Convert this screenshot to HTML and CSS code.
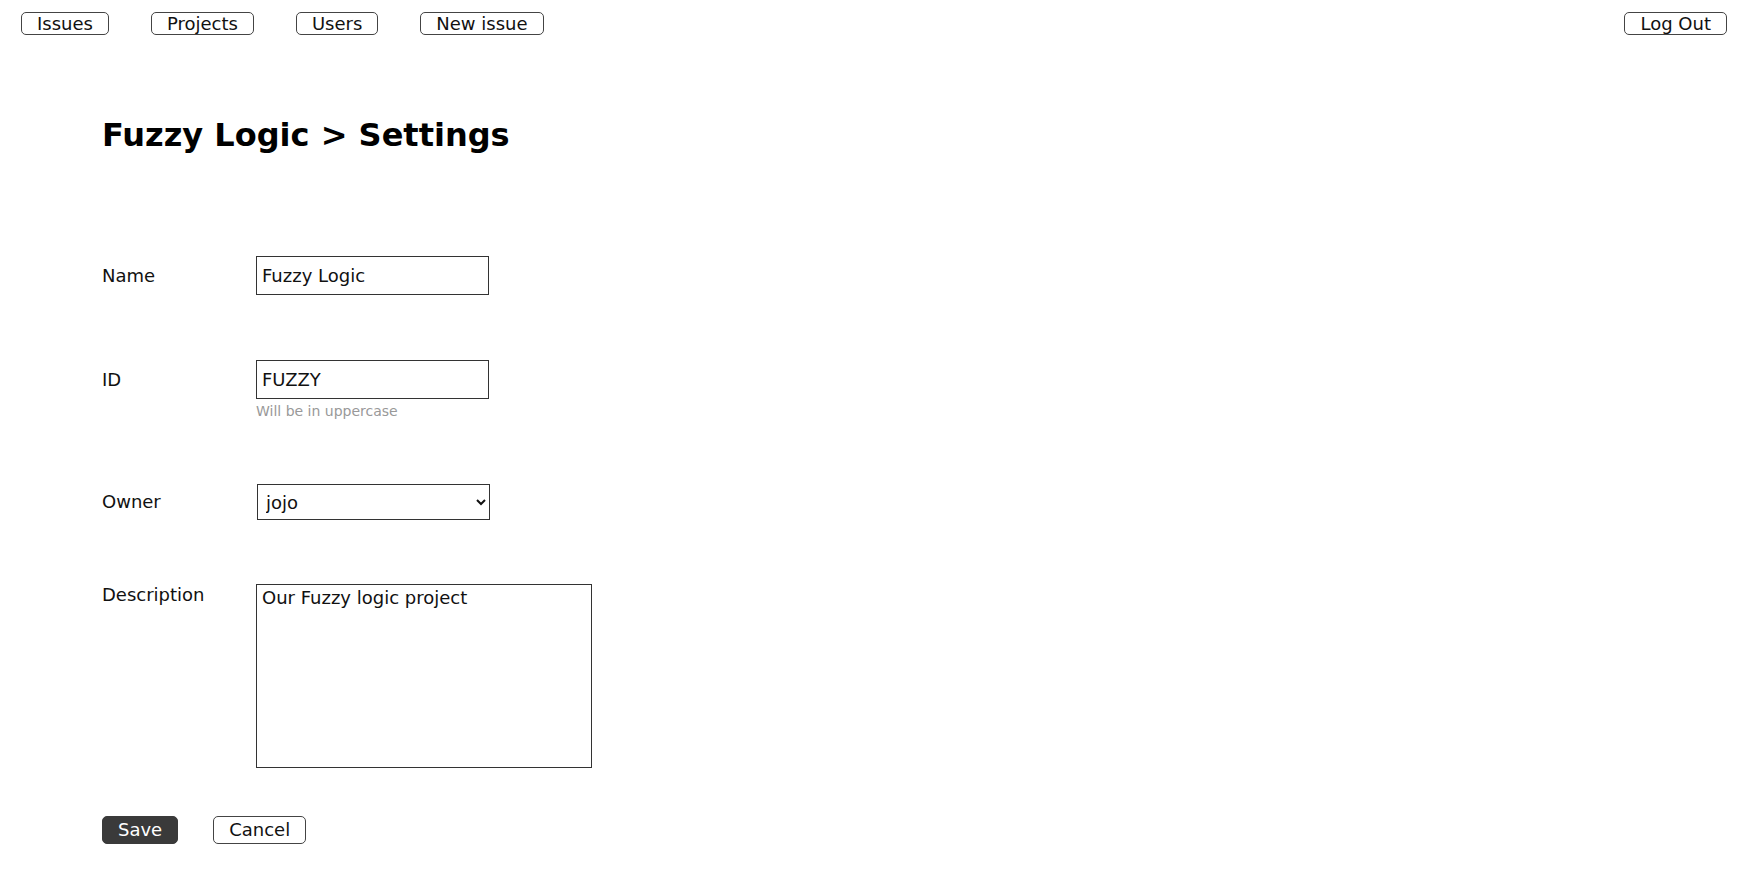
FILE: index.html
```html
<!DOCTYPE html>
<html lang="en">
<head>
<meta charset="utf-8">
<title>Fuzzy Logic › Settings</title>
<link rel="stylesheet" href="styles.css">
</head>
<body>
<nav class="topnav">
  <div class="nav-links">
    <button class="btn">Issues</button>
    <button class="btn">Projects</button>
    <button class="btn">Users</button>
    <button class="btn">New issue</button>
  </div>
  <button class="btn">Log Out</button>
</nav>
<main class="page">
  <h1 class="title">Fuzzy Logic &gt; Settings</h1>
  <form class="settings">
    <div class="row">
      <label class="label label-input" for="name">Name</label>
      <div class="control">
        <input class="field" id="name" type="text" value="Fuzzy Logic">
      </div>
    </div>
    <div class="row row-id">
      <label class="label label-input" for="pid">ID</label>
      <div class="control">
        <input class="field" id="pid" type="text" value="FUZZY">
        <div class="hint">Will be in uppercase</div>
      </div>
    </div>
    <div class="row row-owner">
      <label class="label label-select" for="owner">Owner</label>
      <div class="control">
        <select class="select" id="owner">
          <option>jojo</option>
        </select>
      </div>
    </div>
    <div class="row">
      <label class="label" for="desc">Description</label>
      <div class="control">
        <textarea class="textarea" id="desc">Our Fuzzy logic project</textarea>
      </div>
    </div>
    <div class="actions">
      <button type="button" class="btn btn-action btn-primary">Save</button>
      <button type="button" class="btn btn-action">Cancel</button>
    </div>
  </form>
</main>
</body>
</html>
```
FILE: styles.css
```css
* { box-sizing: border-box; }

html, body {
  margin: 0;
  padding: 0;
  background: #fff;
  color: #111;
  font-family: "DejaVu Sans", "Liberation Sans", sans-serif;
}

.topnav {
  display: flex;
  justify-content: space-between;
  align-items: flex-start;
  padding: 12px 10px 0 21px;
}

.nav-links {
  display: flex;
  gap: 42px;
}

.btn {
  font-family: "DejaVu Sans", "Liberation Sans", sans-serif;
  font-size: 18px;
  color: #111;
  background: #fff;
  border: 1px solid #444;
  border-radius: 5px;
  height: 23px;
  line-height: 21px;
  padding: 0 15px;
  margin: 0;
  cursor: pointer;
}

.page {
  padding: 0 0 0 102px;
}

.title {
  margin: 82px 0 0 0;
  font-size: 32px;
  line-height: 37px;
  font-weight: bold;
  color: #000;
}

.settings {
  margin-top: 102px;
  display: flex;
  flex-direction: column;
  gap: 64px;
  font-size: 18px;
}

.row {
  display: flex;
  align-items: flex-start;
}

.row-id {
  margin-top: 1px;
}

.row-owner {
  margin-top: -1px;
}

.label {
  width: 154px;
  flex: none;
  font-size: 18px;
  line-height: 21px;
  color: #111;
}

.label-input { line-height: 39px; }
.label-select { line-height: 36px; }

.control {
  display: flex;
  flex-direction: column;
}

.field {
  display: block;
  width: 233px;
  height: 39px;
  margin: 0;
  padding: 0 5px;
  border: 1px solid #333;
  border-radius: 0;
  font-family: "DejaVu Sans", "Liberation Sans", sans-serif;
  font-size: 18px;
  color: #111;
  background: #fff;
}

.hint {
  margin-top: 2px;
  font-size: 14px;
  line-height: 20px;
  color: #999;
}

.select {
  display: block;
  width: 233px;
  height: 36px;
  margin: 0 0 0 1px;
  padding: 0 4px;
  border: 1px solid #333;
  border-radius: 0;
  font-family: "DejaVu Sans", "Liberation Sans", sans-serif;
  font-size: 18px;
  color: #111;
  background: #fff;
}

.textarea {
  display: block;
  width: 336px;
  height: 184px;
  margin: 0;
  padding: 2px 5px;
  border: 1px solid #333;
  border-radius: 0;
  resize: none;
  font-family: "DejaVu Sans", "Liberation Sans", sans-serif;
  font-size: 18px;
  color: #111;
  background: #fff;
}

.actions {
  display: flex;
  gap: 35px;
  margin-top: -16px;
}

.btn-action {
  height: 28px;
  line-height: 26px;
  font-size: 18px;
  padding: 0 15px;
}

.btn-primary {
  background: #3a3a3a;
  border-color: #3a3a3a;
  color: #fff;
}
```
